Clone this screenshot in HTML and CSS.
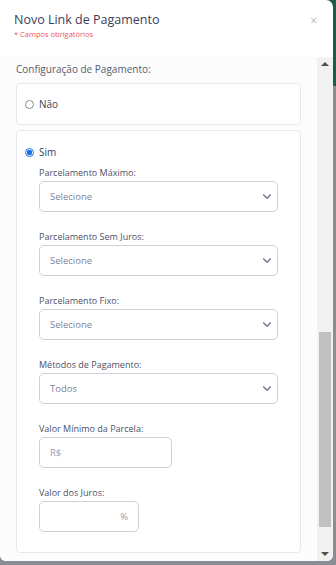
FILE: index.html
```html
<!DOCTYPE html>
<html>
<head>
    <link rel="stylesheet" href="styles.css">
</head>
<body>
    <div class="backdrop-strip"></div>
    <div class="modal">
        <div class="modal-header">
            <h3 class="modal-title">Novo Link de Pagamento</h3>
            <span class="required-note">* Campos obrigatórios</span>
            <span class="close">&times;</span>
        </div>

        <div class="modal-body">
            <div class="scroll-content">
                <p class="section-label">Configuração de Pagamento:</p>

                <div class="option-card">
                    <label class="radio-row">
                        <span class="radio"></span> Não
                    </label>
                </div>

                <div class="option-card">
                    <label class="radio-row">
                        <span class="radio checked"></span> Sim
                    </label>

                    <div class="fields">
                        <div class="field">
                            <label>Parcelamento Máximo:</label>
                            <div class="select">Selecione
                                <svg class="chevron" viewBox="0 0 12 8"><path d="M1.5 1.5 6 6l4.5-4.5" /></svg>
                            </div>
                        </div>
                        <div class="field">
                            <label>Parcelamento Sem Juros:</label>
                            <div class="select">Selecione
                                <svg class="chevron" viewBox="0 0 12 8"><path d="M1.5 1.5 6 6l4.5-4.5" /></svg>
                            </div>
                        </div>
                        <div class="field">
                            <label>Parcelamento Fixo:</label>
                            <div class="select">Selecione
                                <svg class="chevron" viewBox="0 0 12 8"><path d="M1.5 1.5 6 6l4.5-4.5" /></svg>
                            </div>
                        </div>
                        <div class="field">
                            <label>Métodos de Pagamento:</label>
                            <div class="select">Todos
                                <svg class="chevron" viewBox="0 0 12 8"><path d="M1.5 1.5 6 6l4.5-4.5" /></svg>
                            </div>
                        </div>
                        <div class="field">
                            <label>Valor Mínimo da Parcela:</label>
                            <div class="input money">R$</div>
                        </div>
                        <div class="field">
                            <label>Valor dos Juros:</label>
                            <div class="input percent">%</div>
                        </div>
                    </div>
                </div>
            </div>

            <div class="scrollbar">
                <span class="arrow up"></span>
                <div class="track"><div class="thumb"></div></div>
                <span class="arrow down"></span>
            </div>
        </div>
    </div>
</body>
</html>
```

FILE: styles.css
```css
body {
    margin: 0;
    background-color: #8b8d96;
    font-family: "Open Sans", Arial, sans-serif;
    height: 565px;
    overflow: hidden;
    position: relative;
}

.backdrop-strip {
    position: absolute;
    top: 0;
    right: 0;
    width: 20px;
    height: 86px;
    background-color: #1d5c46;
}

.modal {
    position: relative;
    width: 333px;
    height: 561px;
    background-color: #fff;
    border-radius: 0 7px 6px 6px;
    display: flex;
    flex-direction: column;
    overflow: hidden;
}

.modal-header {
    position: relative;
    height: 57px;
    padding: 11px 14px 0;
    box-sizing: border-box;
}

.modal-title {
    margin: 0;
    font-size: 12.5px;
    font-weight: 400;
    color: #3b3e5a;
    line-height: 17px;
}

.required-note {
    display: block;
    margin-top: 1px;
    font-size: 7.5px;
    color: #f0555a;
}

.close {
    position: absolute;
    top: 12px;
    right: 16px;
    font-size: 12px;
    color: #b5b5b5;
}

.modal-body {
    flex: 1;
    display: flex;
    min-height: 0;
}

.scroll-content {
    flex: 1;
    padding: 5px 16px 0;
    background-color: #fcfcfd;
}

.section-label {
    margin: 0 0 7px;
    font-size: 10px;
    line-height: 14px;
    color: #575b6e;
}

.option-card {
    background-color: #fff;
    border: 1px solid #e7e8ee;
    border-radius: 4px;
    margin-bottom: 5px;
    padding: 12px 8px;
}

.option-card + .option-card {
    padding-top: 13px;
}

.radio-row {
    display: flex;
    align-items: center;
    gap: 5px;
    font-size: 10px;
    color: #3b3e5a;
    height: 16px;
}

.radio {
    width: 9px;
    height: 9px;
    border: 1px solid #8a8a8a;
    border-radius: 50%;
    box-sizing: border-box;
}

.radio.checked {
    border: 1px solid #1a73e8;
    background: radial-gradient(circle, #1a73e8 0 2.6px, #fff 3px);
}

.fields {
    padding: 7px 14px 8px;
}

.field {
    margin-bottom: 19px;
}

.field:last-child {
    margin-bottom: 0;
}

.field label {
    display: block;
    font-size: 9px;
    color: #4d5166;
    line-height: 12px;
    margin-bottom: 2px;
}

.select, .input {
    position: relative;
    height: 31px;
    border: 1px solid #cfd1da;
    border-radius: 5px;
    box-sizing: border-box;
    padding: 0 10px;
    display: flex;
    align-items: center;
    font-size: 9.5px;
    color: #7f8396;
    background-color: #fff;
}

.chevron {
    position: absolute;
    right: 5px;
    width: 10px;
    height: 7px;
    fill: none;
    stroke: #707588;
    stroke-width: 1.8;
}

.input.money {
    width: 133px;
    color: #9a9eae;
}

.input.percent {
    width: 100px;
    justify-content: flex-end;
    color: #9a9eae;
}

.scrollbar {
    width: 16px;
    background-color: #f1f1f1;
    display: flex;
    flex-direction: column;
    align-items: center;
}

.arrow {
    width: 0;
    height: 0;
    border-left: 4px solid transparent;
    border-right: 4px solid transparent;
    margin: 5px 0;
}

.arrow.up {
    border-bottom: 4px solid #505050;
}

.arrow.down {
    border-top: 4px solid #505050;
}

.track {
    flex: 1;
    width: 100%;
    display: flex;
    flex-direction: column;
    justify-content: flex-end;
    align-items: center;
}

.thumb {
    width: 12px;
    height: 195px;
    margin-bottom: 20px;
    background-color: #c1c1c1;
}
```
